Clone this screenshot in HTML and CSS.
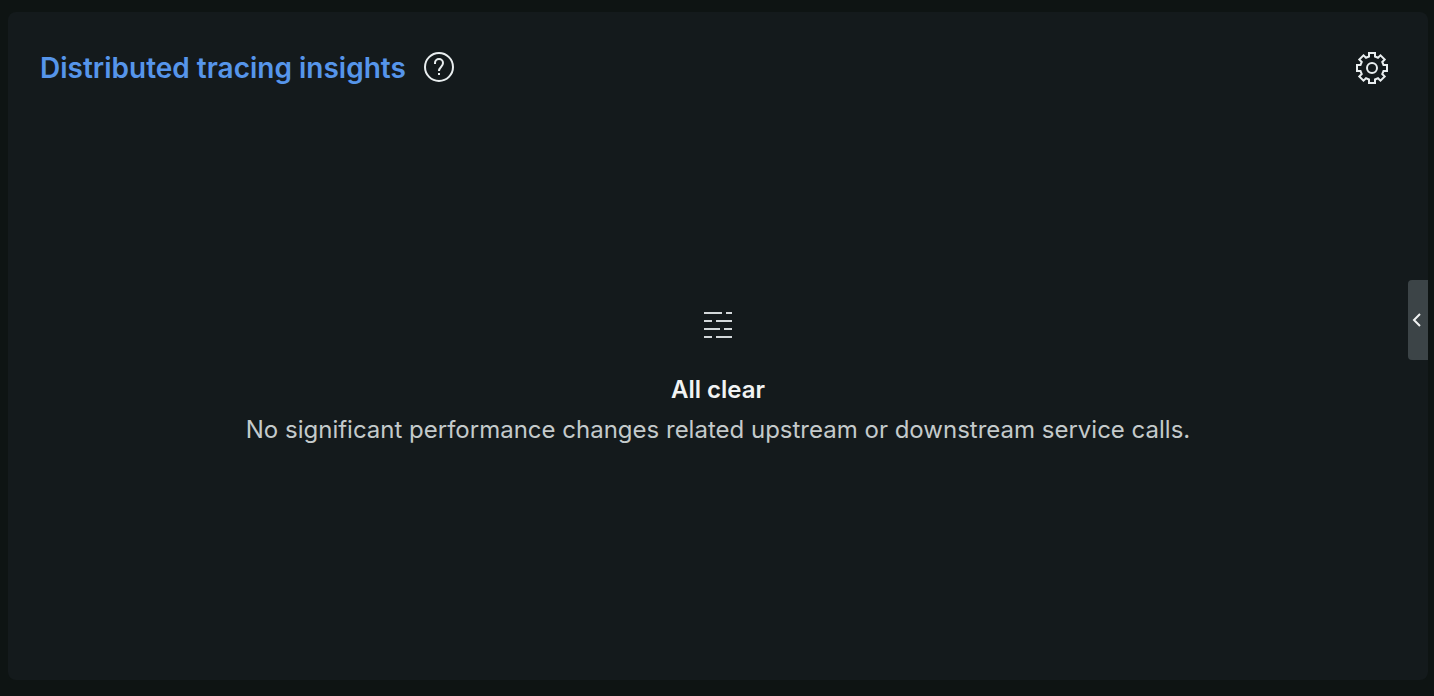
FILE: index.html
```html
<!DOCTYPE html>
<html lang="en">
<head>
<meta charset="utf-8">
<meta name="viewport" content="width=device-width, initial-scale=1">
<title>Distributed tracing insights</title>
<link rel="stylesheet" href="styles.css">
</head>
<body>
<main class="card">
  <header class="card-header">
    <h2 class="card-title"><a href="#insights">Distributed tracing insights</a></h2>
    <button class="icon-button" type="button" aria-label="Help">
      <svg width="32" height="32" viewBox="0 0 32 32" fill="none" stroke="currentColor" stroke-width="2">
        <circle cx="16" cy="15" r="14"/>
        <path d="M12 12v-1a4 4 0 0 1 8 0c0 4-4 4-4 8"/>
        <path d="M15 21h2v2h-2z" fill="currentColor" stroke="none"/>
      </svg>
    </button>
    <button class="icon-button settings" type="button" aria-label="Settings">
      <svg width="32" height="32" viewBox="0 0 32 32" fill="none" stroke="currentColor" stroke-width="2">
        <path d="M13 1h6v3.500l3 1.250 2.500-2.450 4.200 4.200L26.250 10l1.250 3H31v6h-3.500l-1.250 3 2.450 2.500-4.200 4.200L22 26.250l-3 1.250V31h-6v-3.500l-3-1.250-2.500 2.450-4.200-4.200L5.750 22 4.500 19H1v-6h3.500l1.250-3L3.300 7.500l4.200-4.200L10 5.750l3-1.250z"/>
        <circle cx="16" cy="16" r="5"/>
      </svg>
    </button>
  </header>
  <section class="empty">
    <svg class="empty-icon" width="32" height="32" viewBox="0 0 32 32" fill="currentColor" aria-hidden="true">
      <path d="M2 2h18v2H2zM24 2h6v2h-6zM2 10h8v2H2zM14 10h16v2H14zM2 18h16v2H2zM22 18h8v2h-8zM2 26h8v2H2zM14 26h16v2H14z"/>
    </svg>
    <h3 class="empty-title">All clear</h3>
    <p class="empty-text">No significant performance changes related upstream or downstream service calls.</p>
  </section>
  <button class="drawer-toggle" type="button" aria-label="Open panel">
    <svg width="12" height="16" viewBox="0 0 12 16" fill="none" stroke="currentColor" stroke-width="2">
      <path d="M9 2L3 8l6 6"/>
    </svg>
  </button>
</main>
</body>
</html>
```
FILE: styles.css
```css
* {
  box-sizing: border-box;
}

body {
  margin: 0;
  min-height: 100vh;
  display: flex;
  padding: 12px 6px 16px 8px;
  background: #0e1413;
  color: #f1f3f3;
  font-family: Inter, "Liberation Sans", sans-serif;
}

.card {
  position: relative;
  flex: 1;
  display: flex;
  flex-direction: column;
  border-radius: 8px;
  background: #141a1c;
}

.card-header {
  display: flex;
  align-items: center;
  gap: 17px;
  padding: 36px 40px 0 32px;
}

.card-title {
  margin: 0;
  font-size: 28px;
  line-height: 40px;
  font-weight: 600;
}

.card-title a {
  color: #5695ea;
  text-decoration: none;
}

.icon-button {
  display: flex;
  padding: 0;
  border: 0;
  background: none;
  color: #e9eeef;
  cursor: pointer;
}

.settings {
  margin-left: auto;
}

.empty {
  flex: 1;
  display: flex;
  flex-direction: column;
  align-items: center;
  justify-content: center;
  padding: 0 32px 8px;
  text-align: center;
}

.empty-icon {
  color: #d3d8da;
  margin-bottom: 28px;
}

.empty-title {
  margin: 0;
  font-size: 24px;
  line-height: 40px;
  font-weight: 600;
}

.empty-text {
  margin: 0;
  font-size: 24px;
  line-height: 40px;
  color: #c4cacb;
}

.drawer-toggle {
  position: absolute;
  right: 0;
  top: 268px;
  width: 20px;
  height: 80px;
  display: flex;
  align-items: center;
  justify-content: center;
  padding: 0 2px 0 0;
  border: 0;
  border-radius: 4px 0 0 4px;
  background: #3c4447;
  color: #f1f3f3;
  cursor: pointer;
}
```
